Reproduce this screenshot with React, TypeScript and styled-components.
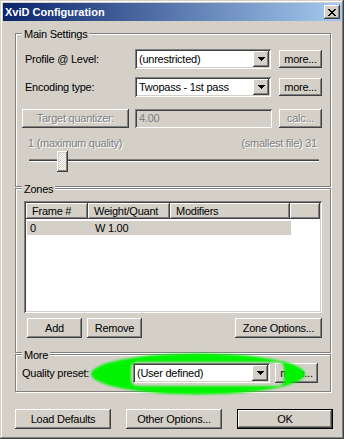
import React from 'react';
import styled, { createGlobalStyle } from 'styled-components';

const FACE = '#D4D0C8';
const FONT = `"Liberation Sans", Arial, sans-serif`;

const raised = `box-shadow: inset -1px -1px #404040, inset 1px 1px #fff, inset -2px -2px #808080, inset 2px 2px ${FACE};`;
const sunken = `box-shadow: inset 1px 1px #808080, inset -1px -1px #fff, inset 2px 2px #404040, inset -2px -2px ${FACE};`;

const Global = createGlobalStyle`
  html, body { margin: 0; padding: 0; background: ${FACE}; }
  body { font-family: ${FONT}; font-size: 11px; }
  #root { width: 344px; height: 439px; }
`;

const Window = styled.div`
  position: relative;
  box-sizing: border-box;
  width: 344px;
  height: 439px;
  padding: 3px 2px 2px 3px;
  background: ${FACE};
  box-shadow: inset -1px -1px #404040, inset 1px 1px ${FACE}, inset -2px -2px #808080, inset 2px 2px #fff;
  display: flex;
  flex-direction: column;
  font-family: ${FONT};
  font-size: 11px;
  line-height: 13px;
  letter-spacing: -0.25px;
  color: #000;
  overflow: hidden;
`;

const TitleBar = styled.div`
  height: 18px;
  display: flex;
  align-items: center;
  justify-content: space-between;
  padding: 0 2px 0 2px;
  background: linear-gradient(to right, #0a246a, #a6caf0);
  flex-shrink: 0;
`;

const TitleText = styled.span`
  color: #fff;
  font-weight: bold;
  font-size: 11px;
  letter-spacing: 0;
  white-space: nowrap;
`;

const CloseButton = styled.div`
  box-sizing: border-box;
  width: 16px;
  height: 14px;
  background: ${FACE};
  ${raised}
  display: flex;
  align-items: center;
  justify-content: center;
`;

const Body = styled.div`
  display: flex;
  flex-direction: column;
  padding: 0 11px 0 12px;
`;

const GroupBox = styled.div<{ $h: number; $mt: number }>`
  position: relative;
  box-sizing: border-box;
  height: ${(p) => p.$h}px;
  margin-top: ${(p) => p.$mt}px;
  border: 1px solid #808080;
  box-shadow: 1px 1px 0 #fff, inset 1px 1px 0 #fff;
  display: flex;
  flex-direction: column;
`;

const Legend = styled.span`
  position: absolute;
  top: -6px;
  left: 6px;
  padding: 0 2px;
  background: ${FACE};
  white-space: nowrap;
`;

const GroupContent = styled.div<{ $pt: number; $pl: number; $pr: number }>`
  display: flex;
  flex-direction: column;
  padding: ${(p) => p.$pt}px ${(p) => p.$pr}px 0 ${(p) => p.$pl}px;
`;

const FieldRow = styled.div<{ $mt: number; $h: number }>`
  display: flex;
  align-items: center;
  height: ${(p) => p.$h}px;
  margin-top: ${(p) => p.$mt}px;
`;

const FieldLabel = styled.span<{ $w: number }>`
  width: ${(p) => p.$w}px;
  flex-shrink: 0;
  white-space: nowrap;
`;

const Button = styled.button<{ $w: number; $h?: number; $ml?: number; $default?: boolean }>`
  box-sizing: border-box;
  flex-shrink: 0;
  width: ${(p) => p.$w}px;
  height: ${(p) => p.$h ?? 20}px;
  margin: 0 0 0 ${(p) => p.$ml ?? 0}px;
  padding: 0;
  border: none;
  background: ${FACE};
  font: 11px ${FONT};
  line-height: 13px;
  letter-spacing: inherit;
  color: #000;
  display: flex;
  align-items: center;
  justify-content: center;
  white-space: nowrap;
  ${(p) =>
    p.$default
      ? `box-shadow: inset 0 0 0 1px #000, inset -2px -2px #404040, inset 2px 2px #fff, inset -3px -3px #808080, inset 3px 3px ${FACE};`
      : raised}
  &:disabled {
    color: #808080;
    text-shadow: 1px 1px 0 #fff;
  }
`;

const Combo = styled.div<{ $w: number }>`
  box-sizing: border-box;
  flex-shrink: 0;
  width: ${(p) => p.$w}px;
  height: 20px;
  padding: 2px;
  background: #fff;
  ${sunken}
  display: flex;
  align-items: center;
`;

const ComboText = styled.span`
  flex: 1;
  padding-left: 2px;
  white-space: nowrap;
  overflow: hidden;
`;

const ComboArrow = styled.div`
  box-sizing: border-box;
  width: 16px;
  height: 16px;
  background: ${FACE};
  ${raised}
  display: flex;
  align-items: center;
  justify-content: center;
`;

const Edit = styled.div<{ $w: number; $ml: number }>`
  box-sizing: border-box;
  flex-shrink: 0;
  width: ${(p) => p.$w}px;
  height: 19px;
  margin-left: ${(p) => p.$ml}px;
  padding: 0 4px;
  background: ${FACE};
  ${sunken}
  color: #808080;
  display: flex;
  align-items: center;
`;

const RangeLabels = styled.div`
  display: flex;
  justify-content: space-between;
  height: 13px;
  margin-top: 9px;
  padding: 0 5px 0 3px;
  color: #808080;
  text-shadow: 1px 1px 0 #fff;
  white-space: nowrap;
`;

const SliderArea = styled.div`
  position: relative;
  box-sizing: border-box;
  height: 21px;
  margin-top: 1px;
  padding: 8px 3px 0 4px;
`;

const Track = styled.div`
  height: 1px;
  background: #404040;
  border-top: 1px solid #808080;
  border-bottom: 1px solid #fff;
`;

const Thumb = styled.div`
  position: absolute;
  top: 0;
  box-sizing: border-box;
  width: 11px;
  height: 21px;
  background-color: ${FACE};
  background-image: repeating-conic-gradient(#fff 0 25%, ${FACE} 0 50%);
  background-size: 2px 2px;
  ${raised}
`;

const ListView = styled.div`
  box-sizing: border-box;
  height: 112px;
  padding: 2px;
  background: #fff;
  ${sunken}
  display: flex;
  flex-direction: column;
`;

const Header = styled.div`
  display: flex;
  height: 16px;
  flex-shrink: 0;
`;

const HeaderCell = styled.div<{ $w?: number }>`
  box-sizing: border-box;
  ${(p) => (p.$w ? `width: ${p.$w}px; flex-shrink: 0;` : 'flex: 1;')}
  height: 16px;
  padding-left: 6px;
  background: ${FACE};
  box-shadow: inset -1px -1px #404040, inset 1px 1px #fff, inset -2px -2px #808080;
  display: flex;
  align-items: center;
  white-space: nowrap;
`;

const ListRow = styled.div<{ $selected?: boolean }>`
  display: flex;
  align-items: center;
  width: 264px;
  height: 14px;
  margin: 2px 0 0 1px;
  background: ${(p) => (p.$selected ? FACE : 'transparent')};
`;

const RowCell = styled.span<{ $w: number; $pl: number }>`
  box-sizing: border-box;
  width: ${(p) => p.$w}px;
  padding-left: ${(p) => p.$pl}px;
  white-space: nowrap;
`;

const ButtonRow = styled.div<{ $mt: number }>`
  display: flex;
  align-items: center;
  margin-top: ${(p) => p.$mt}px;
`;

const Spacer = styled.div`
  flex: 1;
`;

const BottomBar = styled.div`
  display: flex;
  justify-content: space-between;
  margin: 17px -2px 0 0;
`;

const Highlight = styled.svg`
  position: absolute;
  left: 0;
  top: 0;
  pointer-events: none;
`;

const CloseGlyph = () => {
  const rows = ['XX....XX', '.XX..XX.', '..XXXX..', '...XX...', '..XXXX..', '.XX..XX.', 'XX....XX'];
  return (
    <svg width="8" height="7" viewBox="0 0 8 7" shapeRendering="crispEdges">
      {rows.flatMap((r, y) =>
        r.split('').map((c, x) => (c === 'X' ? <rect key={`${x}-${y}`} x={x} y={y} width="1" height="1" fill="#000" /> : null))
      )}
    </svg>
  );
};

const Arrow = () => (
  <svg width="7" height="4" viewBox="0 0 7 4" shapeRendering="crispEdges">
    <path d="M0 0h7v1h-1v1h-1v1h-1v1h-1v-1h-1v-1h-1v-1h-1z" fill="#000" />
  </svg>
);

const ComboBox = ({ w, text }: { w: number; text: string }) => (
  <Combo $w={w}>
    <ComboText>{text}</ComboText>
    <ComboArrow>
      <Arrow />
    </ComboArrow>
  </Combo>
);

const sliderValue = 4;
const sliderMin = 1;
const sliderMax = 31;
const trackWidth = 289;
const thumbWidth = 11;

export default function App() {
  const thumbLeft = 4 + ((sliderValue - sliderMin) / (sliderMax - sliderMin)) * (trackWidth - thumbWidth);
  return (
    <>
      <Global />
      <Window>
        <TitleBar>
          <TitleText>XviD Configuration</TitleText>
          <CloseButton>
            <CloseGlyph />
          </CloseButton>
        </TitleBar>
        <Body>
          <GroupBox $h={154} $mt={12}>
            <Legend>Main Settings</Legend>
            <GroupContent $pt={15} $pl={9} $pr={8}>
              <FieldRow $mt={0} $h={20}>
                <FieldLabel $w={110}>Profile @ Level:</FieldLabel>
                <ComboBox w={136} text="(unrestricted)" />
                <Button $w={43} $h={18} $ml={8}>more...</Button>
              </FieldRow>
              <FieldRow $mt={8} $h={20}>
                <FieldLabel $w={110}>Encoding type:</FieldLabel>
                <ComboBox w={136} text="Twopass - 1st pass" />
                <Button $w={43} $h={18} $ml={8}>more...</Button>
              </FieldRow>
              <FieldRow $mt={12} $h={19}>
                <Button $w={107} $h={19} $ml={-3} disabled>Target quantizer:</Button>
                <Edit $w={137} $ml={6}>4.00</Edit>
                <Button $w={43} $h={19} $ml={7} disabled>calc...</Button>
              </FieldRow>
              <RangeLabels>
                <span>1 (maximum quality)</span>
                <span>(smallest file) 31</span>
              </RangeLabels>
              <SliderArea>
                <Track />
                <Thumb style={{ left: `${thumbLeft}px` }} />
              </SliderArea>
            </GroupContent>
          </GroupBox>

          <GroupBox $h={165} $mt={1}>
            <Legend>Zones</Legend>
            <GroupContent $pt={12} $pl={8} $pr={8}>
              <ListView>
                <Header>
                  <HeaderCell $w={62}>Frame #</HeaderCell>
                  <HeaderCell $w={82}>Weight/Quant</HeaderCell>
                  <HeaderCell $w={120}>Modifiers</HeaderCell>
                  <HeaderCell />
                </Header>
                <ListRow $selected>
                  <RowCell $w={61} $pl={3}>0</RowCell>
                  <RowCell $w={82} $pl={7}>W 1.00</RowCell>
                  <RowCell $w={121} $pl={7}></RowCell>
                </ListRow>
              </ListView>
              <ButtonRow $mt={5}>
                <Button $w={55} $ml={3}>Add</Button>
                <Button $w={55} $ml={5}>Remove</Button>
                <Spacer />
                <Button $w={87}>Zone Options...</Button>
              </ButtonRow>
            </GroupContent>
          </GroupBox>

          <GroupBox $h={38} $mt={1}>
            <Legend>More</Legend>
            <GroupContent $pt={8} $pl={6} $pr={8}>
              <FieldRow $mt={0} $h={20}>
                <FieldLabel $w={111}>Quality preset:</FieldLabel>
                <ComboBox w={137} text="(User defined)" />
                <Button $w={43} $h={20} $ml={5}>more...</Button>
              </FieldRow>
            </GroupContent>
          </GroupBox>

          <BottomBar>
            <Button $w={96}>Load Defaults</Button>
            <Button $w={96}>Other Options...</Button>
            <Button $w={96} $default>OK</Button>
          </BottomBar>
        </Body>

        <Highlight width="344" height="439" viewBox="0 0 344 439">
          <defs>
            <filter id="soft" x="-10%" y="-50%" width="120%" height="200%">
              <feGaussianBlur stdDeviation="1.2" />
            </filter>
          </defs>
          <path
            filter="url(#soft)"
            fill="#00f400"
            fillRule="evenodd"
            d="M91 374a107 20.5 0 1 0 214 0a107 20.5 0 1 0 -214 0Z
               M139 362h137q8 0 8 6v12q0 6 -8 6h-137q-8 0 -8 -6v-12q0 -6 8 -6Z"
          />
        </Highlight>
      </Window>
    </>
  );
}
